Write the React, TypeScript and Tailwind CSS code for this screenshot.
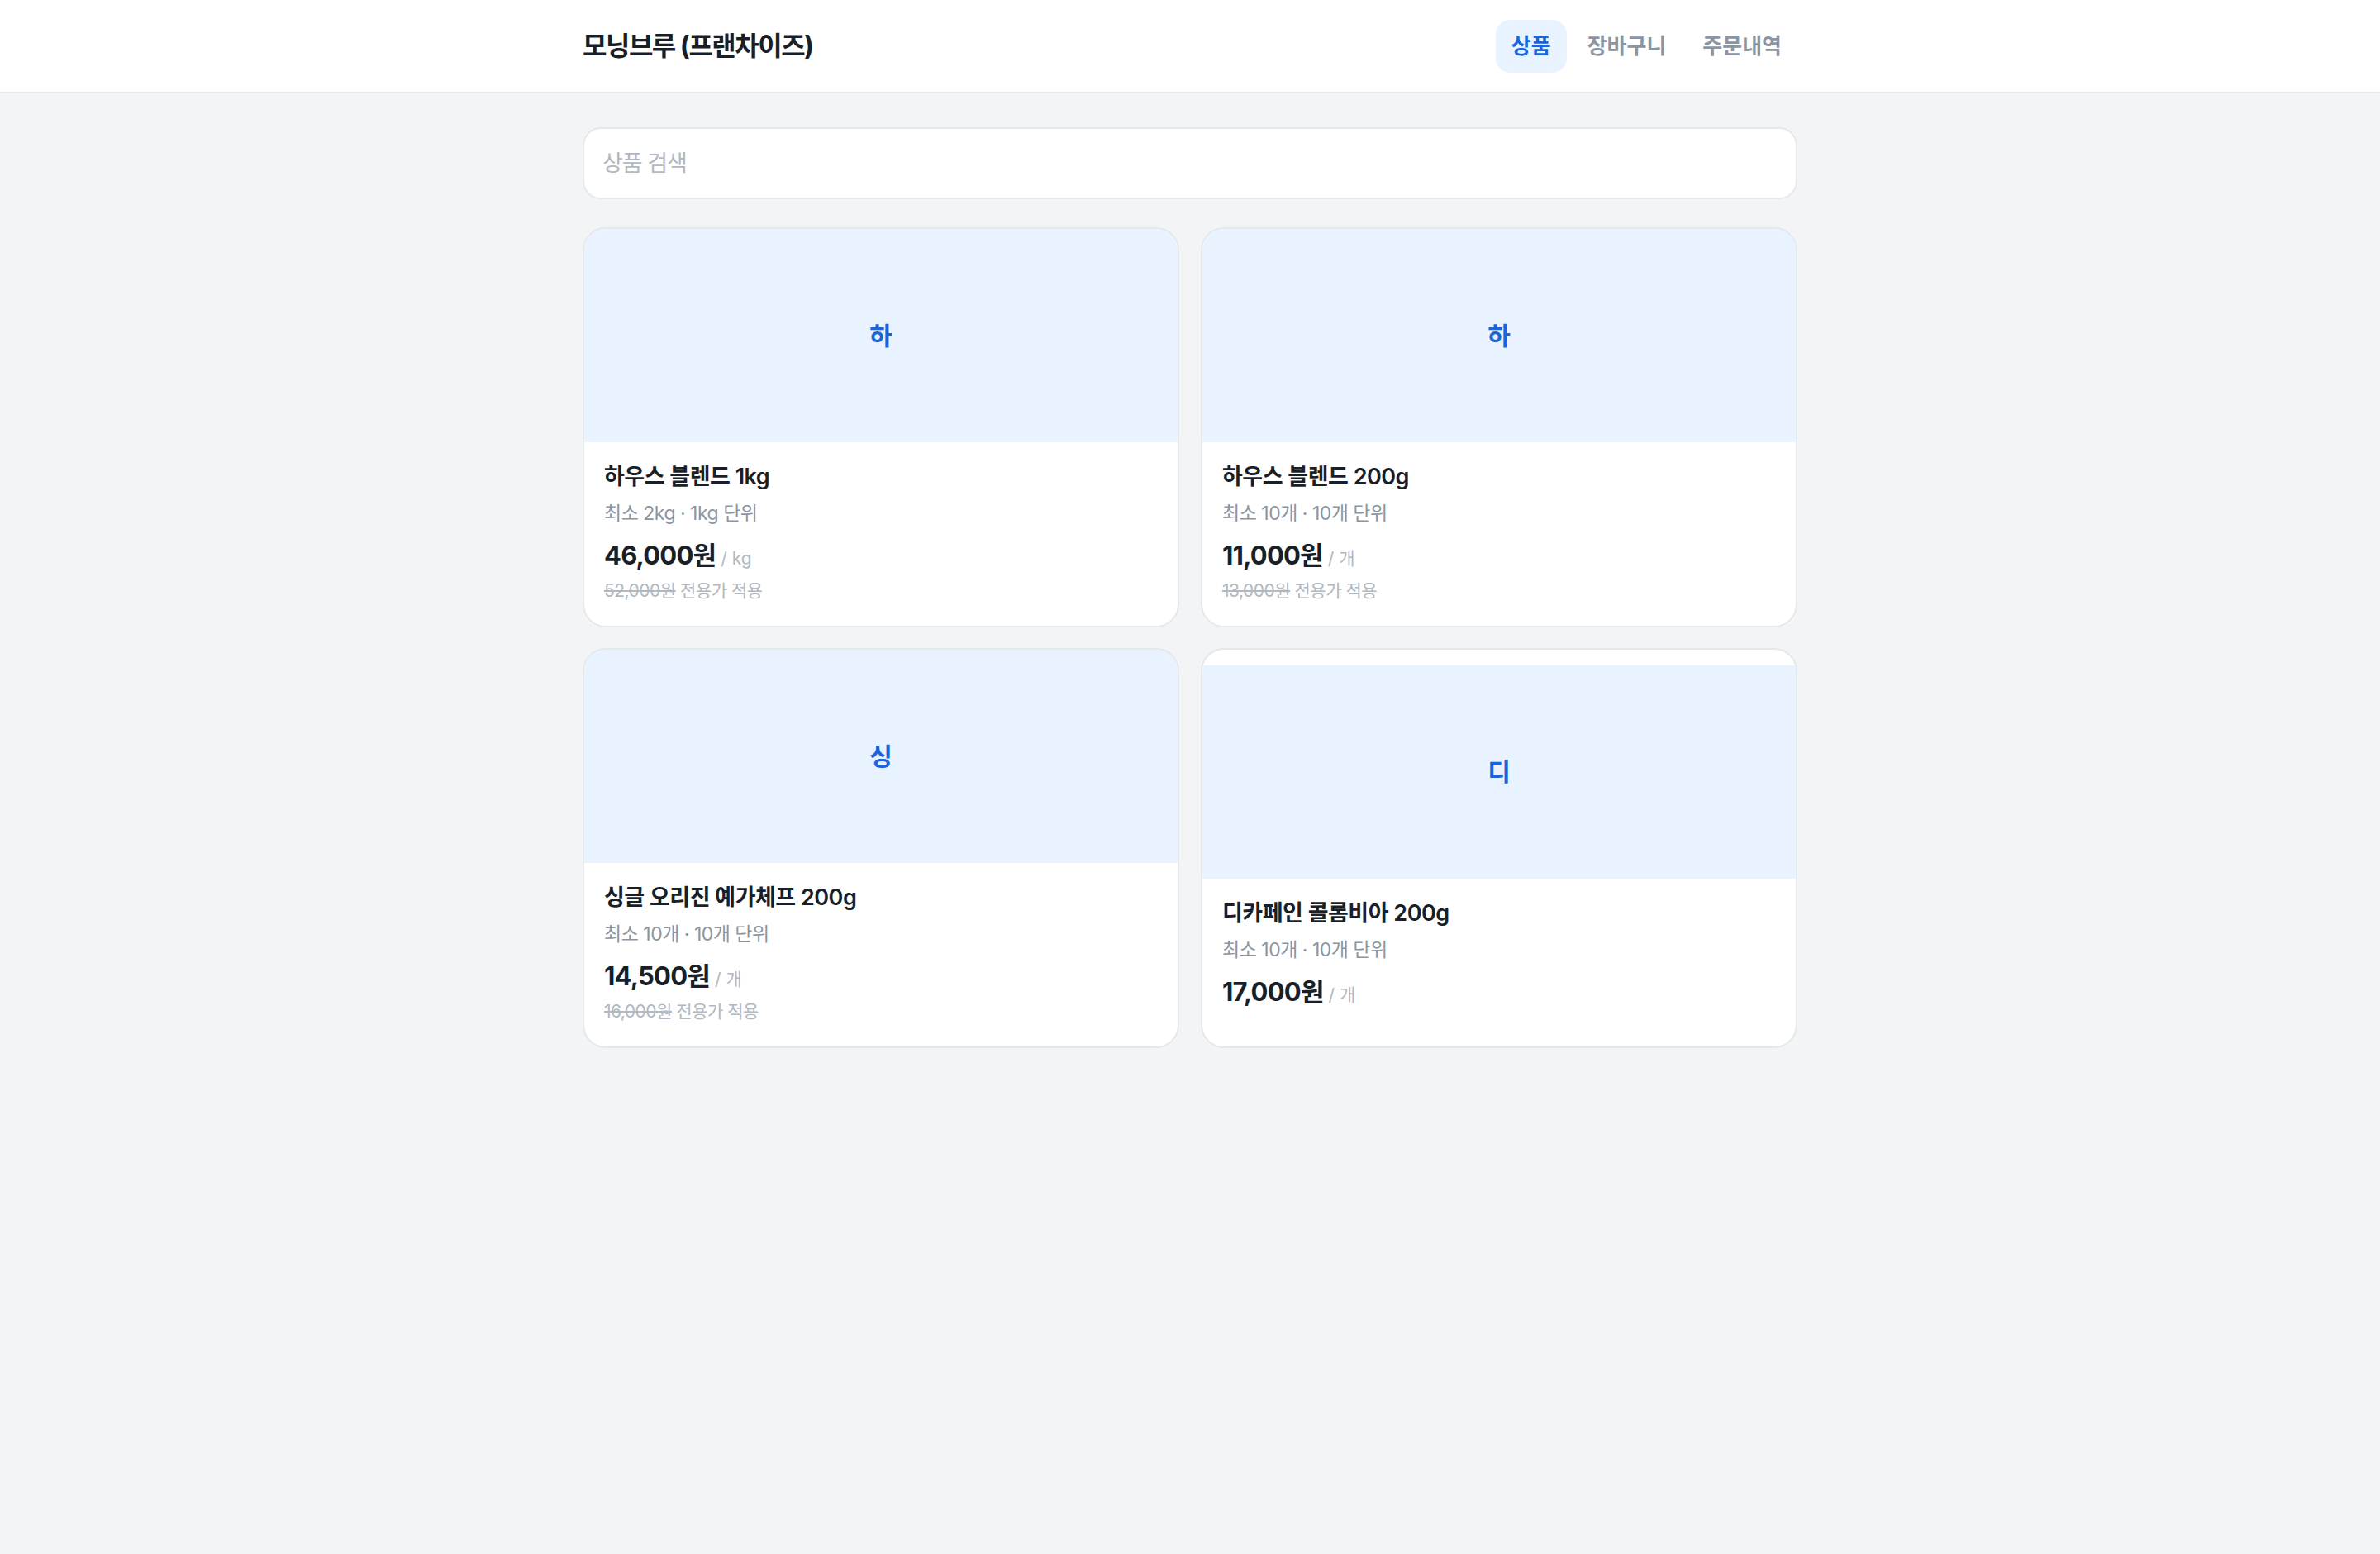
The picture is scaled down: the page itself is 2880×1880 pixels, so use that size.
const products = [
  { id: 1, name: '하우스 블렌드 1kg', unit: '최소 2kg · 1kg 단위', price: '46,000원', per: '/ kg', original: '52,000원' },
  { id: 2, name: '하우스 블렌드 200g', unit: '최소 10개 · 10개 단위', price: '11,000원', per: '/ 개', original: '13,000원' },
  { id: 3, name: '싱글 오리진 예가체프 200g', unit: '최소 10개 · 10개 단위', price: '14,500원', per: '/ 개', original: '16,000원' },
  { id: 4, name: '디카페인 콜롬비아 200g', unit: '최소 10개 · 10개 단위', price: '17,000원', per: '/ 개' },
];

const tabs = ['상품', '장바구니', '주문내역'];

const ProductCard = ({ p }: { p: (typeof products)[number] }) => (
  <div className="flex flex-col justify-center overflow-hidden rounded-[28px] border-2 border-[#e5e8eb] bg-white">
    <div className="flex h-[258px] items-center justify-center bg-[#e8f3ff]">
      <span className="text-[30px] font-bold text-[#1b64da]">{p.name[0]}</span>
    </div>
    <div className="px-[24px] pt-[22px] pb-[26px]">
      <h3 className="text-[27px] leading-[40px] font-semibold tracking-[-0.5px] text-[#191f28]">{p.name}</h3>
      <p className="mt-[7px] text-[23px] leading-[34px] tracking-[-0.5px] text-[#8b95a1]">{p.unit}</p>
      <div className="mt-[12px] flex items-baseline gap-[6px]">
        <span className="text-[31px] leading-[44px] font-bold tracking-[-0.8px] text-[#191f28]">{p.price}</span>
        <span className="text-[21px] text-[#b0b8c1]">{p.per}</span>
      </div>
      {p.original && (
        <p className="mt-[5px] text-[21px] leading-[32px] tracking-[-0.5px] text-[#b0b8c1]">
          <span className="line-through">{p.original}</span> 전용가 적용
        </p>
      )}
    </div>
  </div>
);

export default function App() {
  return (
    <div className="min-h-screen bg-[#f2f4f6] font-['Inter','Noto_Sans_CJK_KR',sans-serif]">
      <header className="h-[113px] border-b-2 border-[#e5e8eb] bg-white">
        <div className="mx-auto flex h-full w-[1470px] items-center justify-between">
          <h1 className="text-[32px] font-bold tracking-[-1.5px] text-[#191f28]">모닝브루 (프랜차이즈)</h1>
          <nav className="flex gap-[6px]">
            {tabs.map((t, i) => (
              <button
                key={t}
                className={
                  i === 0
                    ? 'h-[64px] rounded-[18px] bg-[#e8f3ff] px-[19px] text-[26px] font-bold text-[#1b64da]'
                    : 'h-[64px] rounded-[18px] px-[19px] text-[26px] font-semibold text-[#8b95a1]'
                }
              >
                {t}
              </button>
            ))}
          </nav>
        </div>
      </header>

      <main className="mx-auto w-[1470px] pt-[41px] pb-[40px]">
        <input
          placeholder="상품 검색"
          className="h-[87px] w-full rounded-[22px] border-2 border-[#e5e8eb] bg-white px-[22px] text-[27px] tracking-[-1px] outline-none placeholder:text-[#b0b8c1]"
        />
        <div className="mt-[34px] grid grid-cols-2 gap-x-[26px] gap-y-[25px]">
          {products.map(p => (
            <ProductCard key={p.id} p={p} />
          ))}
        </div>
      </main>
    </div>
  );
}
